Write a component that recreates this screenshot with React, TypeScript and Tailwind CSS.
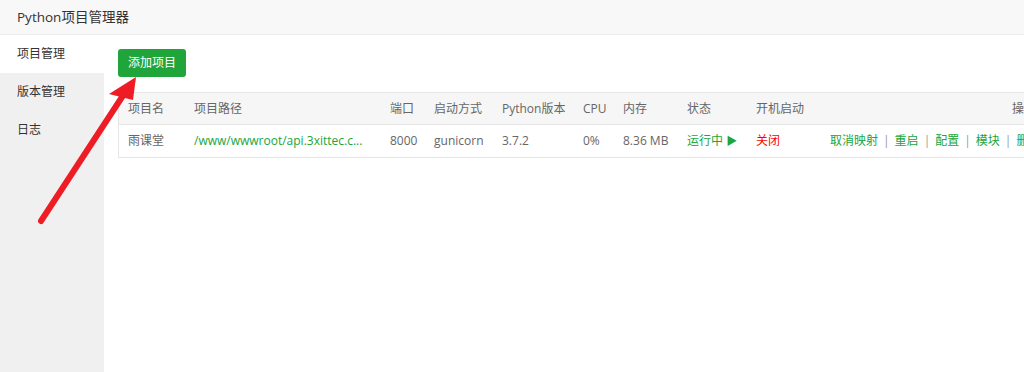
import React from "react";

const font = { fontFamily: '"Open Sans", "Noto Sans CJK SC", sans-serif' };

const cols = [
  { h: "项目名", w: "w-[75px] pl-[9px]" },
  { h: "项目路径", w: "w-[196px]" },
  { h: "端口", w: "w-[44px]" },
  { h: "启动方式", w: "w-[68px]" },
  { h: "Python版本", w: "w-[81px]" },
  { h: "CPU", w: "w-[40px]" },
  { h: "内存", w: "w-[64px]" },
  { h: "状态", w: "w-[69px]" },
  { h: "开机启动", w: "w-[74px]" },
];

function Sep() {
  return <span className="px-[5px] text-[#999]">|</span>;
}

export default function App() {
  return (
    <div
      className="relative w-[1024px] h-[372px] overflow-hidden bg-white text-[#333]"
      style={font}
    >
      <div className="h-[35px] bg-[#f8f8f8] border-b border-[#ececec] flex items-center pl-[17px] text-[13.5px] text-[#333]">
        Python项目管理器
      </div>
      <div className="flex h-[337px]">
        <div className="w-[104px] shrink-0 bg-[#f0f0f0] flex flex-col text-[12px] text-[#333]">
          <div className="h-[38px] bg-white flex items-center pl-[17px]">项目管理</div>
          <div className="h-[38px] flex items-center pl-[17px]">版本管理</div>
          <div className="h-[38px] flex items-center pl-[17px]">日志</div>
        </div>
        <div className="flex-1 pl-[14px] pt-[14px] overflow-hidden">
          <button className="h-[28px] w-[68px] bg-[#20a53a] text-white text-[12px] rounded-[3px] flex items-center justify-center">
            添加项目
          </button>
          <div className="mt-[15px] w-[928px] border border-[#e6e6e6] text-[12px] text-[#666]">
            <div className="flex h-[32px] items-center bg-[#f6f6f6] border-b border-[#e6e6e6]">
              {cols.map((c) => (
                <div key={c.h} className={`${c.w} shrink-0 whitespace-nowrap`}>
                  {c.h}
                </div>
              ))}
              <div className="flex-1 text-right pr-[9px]">操作</div>
            </div>
            <div className="flex h-[32px] items-center">
              <div className="w-[75px] pl-[9px] shrink-0">雨课堂</div>
              <div className="w-[196px] shrink-0 text-[#20a53a] whitespace-nowrap">
                /www/wwwroot/api.3xittec.c...
              </div>
              <div className="w-[44px] shrink-0">8000</div>
              <div className="w-[68px] shrink-0">gunicorn</div>
              <div className="w-[81px] shrink-0">3.7.2</div>
              <div className="w-[40px] shrink-0">0%</div>
              <div className="w-[64px] shrink-0 whitespace-nowrap">8.36 MB</div>
              <div className="w-[69px] shrink-0 text-[#20a53a] whitespace-nowrap">
                运行中 <span className="text-[11px]">▶</span>
              </div>
              <div className="w-[74px] shrink-0 text-[#ff0000]">关闭</div>
              <div className="flex-1 text-left whitespace-nowrap text-[#20a53a]">
                取消映射<Sep />重启<Sep />配置<Sep />模块<Sep />删除
              </div>
            </div>
          </div>
        </div>
      </div>
      <svg
        className="absolute left-0 top-0 pointer-events-none"
        width="1024"
        height="372"
        viewBox="0 0 1024 372"
      >
        <line
          x1="41"
          y1="221"
          x2="124"
          y2="94"
          stroke="#ee1c25"
          strokeWidth="6"
          strokeLinecap="round"
        />
        <polygon points="136,77 109,94 133,100" fill="#ee1c25" />
      </svg>
    </div>
  );
}
